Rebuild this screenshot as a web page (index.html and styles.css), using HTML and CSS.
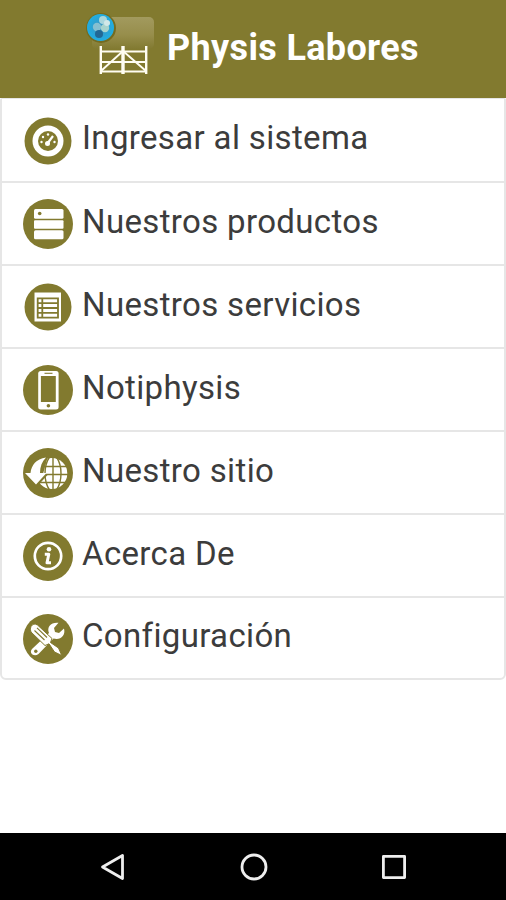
FILE: index.html
```html
<!DOCTYPE html>
<html lang="es">
<head>
<meta charset="utf-8">
<title>Physis Labores</title>
<link rel="stylesheet" href="styles.css">
</head>
<body>
<header class="header">
  <svg class="logo" viewBox="0 0 70 62">
    <defs>
      <linearGradient id="panel" x1="0" y1="0" x2="0" y2="1"><stop offset="0" stop-color="#a29a5e"/><stop offset=".55" stop-color="#978e4c"/><stop offset="1" stop-color="#827a31"/></linearGradient>
      <radialGradient id="sky"><stop offset="0" stop-color="#3d91bd"/><stop offset="1" stop-color="#20aee2"/></radialGradient>
    </defs>
    <rect x="7" y="5" width="62" height="32" rx="5" fill="url(#panel)"/>
    <circle cx="16" cy="16" r="15" fill="#746b20"/>
    <circle cx="15.5" cy="15.5" r="13.5" fill="url(#sky)"/>
    <circle cx="18" cy="8" r="4" fill="#a9d6dd"/><circle cx="12" cy="15" r="4.2" fill="#86bfd0"/><circle cx="20" cy="16" r="4.2" fill="#a7d3cd"/><circle cx="14" cy="22" r="4" fill="#226894"/><circle cx="22" cy="11" r="3" fill="#d1e8e8"/>
    <g fill="none" stroke="#fffdf2" stroke-width="1.9"><path d="M16 39.5H61M16 50H61M16 59.5H61"/><path stroke-width="2" d="M16 59L38 39L61 59"/><path stroke-width="2.4" d="M15.8 34V62M61.2 34V62"/><path stroke-width="3.4" d="M38 34V62"/></g>
  </svg>
  <h1 class="title">Physis Labores</h1>
</header>
<main class="content">
<ul class="menu">
  <li class="item"><svg class="icon" viewBox="0 0 50 50"><circle class="o" cx="25" cy="25" r="23.5"/><circle class="w" cx="25" cy="25" r="15.5"/><circle class="o" cx="25" cy="25" r="10"/><path d="M24 28L30 20" stroke="#fff" stroke-width="2.2"/><circle class="w" cx="24.5" cy="27.5" r="2.5"/><g class="w"><circle cx="18.5" cy="26" r="1.2"/><circle cx="20" cy="21" r="1.2"/><circle cx="25" cy="18.5" r="1.2"/><circle cx="31.5" cy="26" r="1.2"/></g></svg><span class="label">Ingresar al sistema</span></li>
  <li class="item"><svg class="icon" viewBox="0 0 50 50"><circle class="o" cx="25" cy="25" r="25"/><g class="w"><rect x="11" y="10" width="29.5" height="9.7" rx="1.5"/><rect x="11" y="21.2" width="29.5" height="8.5" rx="1"/><rect x="11" y="31.2" width="29.5" height="9" rx="1.5"/></g><circle class="o" cx="16.7" cy="14.5" r="1.8"/></svg><span class="label">Nuestros productos</span></li>
  <li class="item"><svg class="icon" viewBox="0 0 50 50"><circle class="o" cx="25" cy="25" r="23.5"/><path class="w" d="M11.5 10.5H38V39.5H11.5Z"/><path class="l" d="M14.7 16.3H35V35.7H14.7ZM19.3 16.3V35.7M14.7 21.2H35M14.7 26H35M14.7 30.8H35"/></svg><span class="label">Nuestros servicios</span></li>
  <li class="item"><svg class="icon" viewBox="0 0 50 50"><circle class="o" cx="25" cy="25" r="25"/><rect class="w" x="15.2" y="6" width="20.4" height="38.5" rx="2.5"/><path class="o" d="M17.9 11H32.8V37H17.9Z"/><path class="l thin" d="M21.5 8.3H29.5"/><circle class="o" cx="25.4" cy="40.7" r="1.8"/></svg><span class="label">Notiphysis</span></li>
  <li class="item"><svg class="icon" viewBox="0 0 50 50"><circle class="o" cx="25" cy="25" r="25"/><circle class="w" cx="28.8" cy="25.5" r="15.5"/><path class="l globe" d="M30 9V42M13 18.500H44M13 26.500H45M16 34.500H43M26.500 9C20.500 18 20.500 33 26.500 42M33.500 9C39.500 18 39.500 33 33.500 42"/><path class="o" d="M6 26L14 9L25 8L20 26H25.500L13 39.500Z"/><path class="w" d="M7.500 25C8.500 17 13 11 23 9.500C19 13.500 17 18.500 17 25H23.500L13 36.500L2 25Z"/></svg><span class="label">Nuestro sitio</span></li>
  <li class="item"><svg class="icon" viewBox="0 0 50 50"><circle class="o" cx="25" cy="25" r="25"/><circle cx="25" cy="25" r="13.2" fill="none" stroke="#fff" stroke-width="2.7"/><circle class="w" cx="26" cy="18.3" r="2.3"/><path d="M21.800 23.200H25.800L24 31.800H28" fill="none" stroke="#fff" stroke-width="3" stroke-linejoin="round"/></svg><span class="label">Acerca De</span></li>
  <li class="item"><svg class="icon" viewBox="0 0 50 50"><circle class="o" cx="25" cy="25" r="25"/><path class="w" d="M9 35L26 19C23.500 13 28 8 35.500 8.800L31 14L32 18L36 19L41 14.500C43 22 37 26.500 30.500 24.500L15.500 40C11 43.500 5.500 39 9 35Z"/><circle class="o" cx="12.8" cy="37.3" r="1.7"/><path class="w" stroke="#827a2f" stroke-width="1" d="M8 12.500Q10.500 8.500 14.500 11L29 24.500L27.500 28.500L35.500 34L38.800 41.500L31.500 38L26 29.800L22 31.500L8 18Q6.500 15 8 12.500Z"/><path class="l thin" d="M11.500 16.500L21.500 26M14 13.800L24 23.500"/></svg><span class="label">Configuración</span></li>
</ul>
</main>
<nav class="navbar">
  <svg class="nav-icon" viewBox="0 0 28 28"><path d="M3.500 14L23.500 2.500V25.500Z"/></svg>
  <svg class="nav-icon" viewBox="0 0 28 28"><circle cx="14" cy="14" r="12"/></svg>
  <svg class="nav-icon" viewBox="0 0 28 28"><path d="M3.400 3.400H24.600V24.600H3.400Z"/></svg>
</nav>
</body>
</html>
```
FILE: styles.css
```css
* { box-sizing: border-box; }
body {
  margin: 0;
  height: 900px;
  display: flex;
  flex-direction: column;
  background: #fff;
  font-family: Roboto, "Liberation Sans", sans-serif;
  overflow: hidden;
}
.header {
  height: 98px;
  flex: none;
  display: flex;
  align-items: flex-start;
  padding: 12px 0 0 85px;
  background: #827a2f;
}
.logo { width: 70px; height: 62px; flex: none; }
.title {
  margin: 15px 0 0 12px;
  font-size: 36px;
  line-height: 42px;
  font-weight: 700;
  letter-spacing: .35px;
  color: #fff;
  white-space: nowrap;
}
.content { flex: 1; }
.menu {
  margin: 0;
  padding: 0;
  list-style: none;
  border: 2px solid #e6e6e6;
  border-top-width: 1px;
  border-radius: 2px 2px 6px 6px;
}
.item {
  height: 83px;
  display: flex;
  align-items: center;
  padding-left: 21px;
  border-bottom: 2px solid #e6e6e6;
}
.item:first-child { height: 84px; }
.item:last-child { height: 80px; border-bottom: 0; }
.icon { width: 50px; height: 50px; flex: none; margin-top: 1px; }
.label {
  margin: 0 0 4px 9px;
  font-size: 33px;
  line-height: 40px;
  font-weight: 400;
  letter-spacing: .35px;
  color: #3c3c3c;
  white-space: nowrap;
}
.o { fill: #827a2f; }
.w { fill: #fff; }
.l { fill: none; stroke: #827a2f; stroke-width: 1.8; }
.thin { stroke-width: 1.1; }
.globe { stroke-width: 1.4; }
.navbar {
  height: 67px;
  flex: none;
  display: flex;
  justify-content: space-between;
  align-items: center;
  padding: 0 98px 0 99px;
  background: #000;
}
.nav-icon { width: 28px; height: 28px; fill: none; stroke: #eee; stroke-width: 2.8; stroke-linejoin: round; }
```
